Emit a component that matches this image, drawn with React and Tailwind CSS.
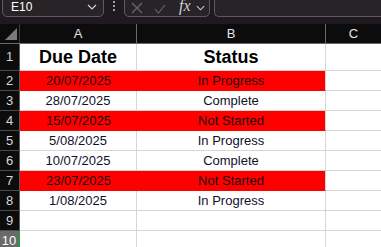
import React from "react";

const rows = [
  { date: "20/07/2025", status: "In Progress", red: true },
  { date: "28/07/2025", status: "Complete" },
  { date: "15/07/2025", status: "Not Started", red: true },
  { date: "5/08/2025", status: "In Progress" },
  { date: "10/07/2025", status: "Complete" },
  { date: "23/07/2025", status: "Not Started", red: true },
  { date: "1/08/2025", status: "In Progress" },
  { date: "", status: "" },
  { date: "", status: "" },
];

function RowHead({ n, tall, active }) {
  return (
    <div
      className={
        "w-[20px] shrink-0 flex items-center justify-center text-[13px] border-r border-b " +
        (active
          ? "bg-[#6a6a6a] text-white border-r-[#2f8f4f] border-r-2 border-b-[#555]"
          : "bg-[#0c0c0c] text-[#d8d8d8] border-r-[#5c5c5c] border-b-[#4a4a4a]") +
        (tall ? " h-[27px]" : " h-[20px]")
      }
    >
      {n}
    </div>
  );
}

function App() {
  return (
    <div
      className="w-[381px] h-[247px] overflow-hidden bg-white"
      style={{ fontFamily: '"Liberation Sans", Arial, sans-serif' }}
    >
      {/* toolbar */}
      <div className="h-[24px] bg-[#1f1a1f] flex items-start">
        <div className="ml-[2px] -mt-[4px] w-[102px] h-[21px] rounded-b-[5px] border border-[#5e5a5e] bg-[#272327] flex items-end justify-between pl-[8px] pr-[6px] pb-[3px]">
          <span className="text-white text-[12px] leading-none">E10</span>
          <svg width="10" height="6" viewBox="0 0 10 6" className="mb-[3px]">
            <path d="M1 1l4 4 4-4" fill="none" stroke="#cfcfcf" strokeWidth="1.2" />
          </svg>
        </div>
        <div className="ml-[9px] mt-[1px] flex flex-col gap-[2px]">
          <div className="w-[2px] h-[2px] bg-[#cfcfcf] rounded-full" />
          <div className="w-[2px] h-[2px] bg-[#cfcfcf] rounded-full" />
          <div className="w-[2px] h-[2px] bg-[#cfcfcf] rounded-full" />
        </div>
        <div className="ml-[9px] -mt-[4px] w-[86px] h-[21px] rounded-b-[5px] border border-[#5e5a5e] bg-[#272327] flex items-end pl-[6px] pb-[2px] gap-[11px]">
          <svg width="12" height="12" viewBox="0 0 12 12">
            <path d="M1 1l10 10M11 1l-10 10" stroke="#6e6a6e" strokeWidth="1.1" />
          </svg>
          <svg width="12" height="10" viewBox="0 0 12 10">
            <path d="M1 5l3.5 4L11 1" fill="none" stroke="#6e6a6e" strokeWidth="1.1" />
          </svg>
          <span
            className="text-[#d0d0d0] text-[16px] italic leading-none ml-[2px]"
            style={{ fontFamily: '"Liberation Serif", serif' }}
          >
            fx
          </span>
          <svg width="9" height="6" viewBox="0 0 10 6" className="mb-[3px] -ml-[6px]">
            <path d="M1 1l4 4 4-4" fill="none" stroke="#cfcfcf" strokeWidth="1.2" />
          </svg>
        </div>
        <div className="ml-[4px] -mt-[4px] flex-1 h-[21px] rounded-bl-[5px] border border-r-0 border-[#5e5a5e] bg-[#272327]" />
      </div>

      {/* column headers */}
      <div className="flex h-[20px] bg-[#0c0c0c] border-b border-[#6a6a6a] text-[#e4e4e4] text-[13px]">
        <div className="w-[20px] shrink-0 relative border-r border-[#3a3a3a]">
          <svg width="12" height="12" viewBox="0 0 12 12" className="absolute left-[5px] top-[4px]">
            <path d="M12 0V12H0Z" fill="#7a7a7a" />
          </svg>
        </div>
        <div className="w-[117px] shrink-0 flex items-center justify-center border-r border-[#6a6a6a]">A</div>
        <div className="w-[189px] shrink-0 flex items-center justify-center border-r border-[#6a6a6a]">B</div>
        <div className="flex-1 flex items-center justify-center">C</div>
      </div>

      {/* row 1 */}
      <div className="flex">
        <RowHead n={1} tall />
        <div className="w-[117px] shrink-0 h-[27px] border-r border-b border-[#d6d6d6] flex items-center justify-center font-bold text-[18px] text-black">
          Due Date
        </div>
        <div className="w-[189px] shrink-0 h-[27px] border-r border-b border-[#d6d6d6] flex items-center justify-center font-bold text-[18px] text-black">
          Status
        </div>
        <div className="flex-1 h-[27px] border-b border-[#d6d6d6]" />
      </div>

      {rows.map((r, i) => (
        <div key={i} className="flex">
          <RowHead n={i + 2} active={i + 2 === 10} />
          <div
            className={
              "w-[117px] shrink-0 h-[20px] flex items-center justify-center text-[13px] border-b " +
              (r.red
                ? "bg-[#ff0000] border-[#ff0000] text-[#1a0a0a]"
                : "border-r border-[#d6d6d6] text-[#10102a]")
            }
          >
            {r.date}
          </div>
          <div
            className={
              "w-[189px] shrink-0 h-[20px] flex items-center justify-center text-[13px] border-b border-r " +
              (r.red
                ? "bg-[#ff0000] border-b-[#ff0000] border-r-[#d6d6d6] text-[#1a0a0a]"
                : "border-[#d6d6d6] text-[#10102a]")
            }
          >
            {r.status}
          </div>
          <div className="flex-1 h-[20px] border-b border-[#d6d6d6]" />
        </div>
      ))}
      <div className="flex">
        <RowHead n={10} active />
        <div className="w-[117px] shrink-0 h-[20px] border-r border-[#d6d6d6]" />
        <div className="w-[189px] shrink-0 h-[20px] border-r border-[#d6d6d6]" />
        <div className="flex-1" />
      </div>
    </div>
  );
}

export default App;
